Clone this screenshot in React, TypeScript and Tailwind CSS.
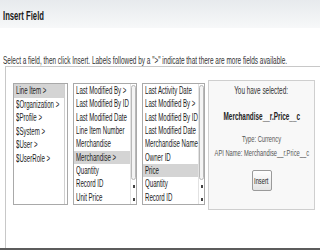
import React from "react";

function T({ children, className = "" }: { children: React.ReactNode; className?: string }) {
  return <span className={"inline-block shrink-0 whitespace-nowrap origin-left " + className}>{children}</span>;
}

function C({ children, className = "" }: { children: React.ReactNode; className?: string }) {
  return (
    <div className="flex justify-center">
      <span className={"inline-block shrink-0 whitespace-nowrap origin-center scale-x-[0.64] " + className}>
        {children}
      </span>
    </div>
  );
}

function Row({ label, selected }: { label: string; selected?: boolean }) {
  return (
    <div
      className={
        "h-[13.5px] flex items-center pl-[2px] text-[10px] leading-[13px] text-[#222] " +
        (selected ? "bg-[#d4d4d4]" : "")
      }
    >
      <T className="scale-x-[0.61]">{label}</T>
    </div>
  );
}

function ScrollBar() {
  return (
    <div className="w-[6px] shrink-0 flex flex-col items-center border-l border-[#e2e2e2] bg-white">
      <div className="mt-[1px] w-[5px] h-[95px] rounded-full border border-[#b8b8b8] bg-[#f4f4f4]" />
      <div className="flex-1" />
      <div className="w-[2px] h-[3px] bg-[#444] mb-[10px]" />
      <div className="w-[2px] h-[3px] bg-[#444] mb-[3px]" />
    </div>
  );
}

function List({ width, items, sel, scroll }: { width: string; items: string[]; sel: number; scroll?: boolean }) {
  return (
    <div className={"h-[122px] mt-[3px] border border-[#a9a9a9] bg-white flex shrink-0 " + width}>
      <div className="flex-1 min-w-0 flex flex-col">
        {items.map((it, i) => (
          <Row key={it + i} label={it} selected={i === sel} />
        ))}
      </div>
      {scroll ? <ScrollBar /> : <div className="w-[3px] shrink-0 border-l border-[#d0d0d0]" />}
    </div>
  );
}

export default function App() {
  return (
    <div className="w-[320px] h-[250px] bg-white overflow-hidden flex flex-col font-['Liberation_Sans',Arial,sans-serif]">
      <div className="h-[28px] shrink-0 bg-linear-to-b from-[#e7eaed] to-[#f7f8f9] pl-[3px] pt-[3px]">
        <T className="scale-x-[0.64] text-[12px] leading-[14px] font-bold text-[#1a1a1a]">Insert Field</T>
      </div>
      <div className="h-[38px] shrink-0 pl-[3px] pt-[19px]">
        <T className="scale-x-[0.645] text-[10px] leading-[11px] text-[#333]">
          Select a field, then click Insert. Labels followed by a "&gt;" indicate that there are more fields available.
        </T>
      </div>
      <div className="flex-1 ml-[5px] border-l border-t border-[#c8c8c8] pl-[7px] pt-[13px] flex items-start">
        <List
          width="w-[55px]"
          sel={0}
          items={["Line Item >", "$Organization >", "$Profile >", "$System >", "$User >", "$UserRole >"]}
        />
        <div className="w-[5px] shrink-0" />
        <List
          width="w-[64px]"
          sel={5}
          scroll
          items={[
            "Last Modified By >",
            "Last Modified By ID",
            "Last Modified Date",
            "Line Item Number",
            "Merchandise",
            "Merchandise >",
            "Quantity",
            "Record ID",
            "Unit Price",
          ]}
        />
        <div className="w-[5px] shrink-0" />
        <List
          width="w-[63px]"
          sel={6}
          scroll
          items={[
            "Last Activity Date",
            "Last Modified By >",
            "Last Modified By ID",
            "Last Modified Date",
            "Merchandise Name",
            "Owner ID",
            "Price",
            "Quantity",
            "Record ID",
          ]}
        />
        <div className="w-[3px] shrink-0" />
        <div className="w-[107px] h-[130px] shrink-0 border border-[#cfcfcf] bg-[#f8f8f8] flex flex-col text-[#333]">
          <div className="h-[4px]" />
          <C className="text-[10px] leading-[12px]">You have selected:</C>
          <div className="h-[14px]" />
          <C className="text-[10px] leading-[12px] font-bold text-[#222]">Merchandise__r.Price__c</C>
          <div className="h-[11px]" />
          <C className="text-[9px] leading-[11px] text-[#555]">Type: Currency</C>
          <div className="h-[3px]" />
          <C className="text-[9px] leading-[11px] text-[#555]">API Name: Merchandise__r.Price__c</C>
          <div className="h-[11px]" />
          <div className="flex justify-center">
            <div className="w-[20px] h-[21px] border border-[#9a9a9a] rounded-[2px] bg-linear-to-b from-white to-[#e4e4e4] flex items-center justify-center">
              <span className="inline-block shrink-0 whitespace-nowrap origin-center scale-x-[0.64] text-[9px] leading-[10px] text-[#222]">
                Insert
              </span>
            </div>
          </div>
        </div>
      </div>
      <div className="h-[2px] shrink-0 bg-[#5c5c5c]" />
    </div>
  );
}
